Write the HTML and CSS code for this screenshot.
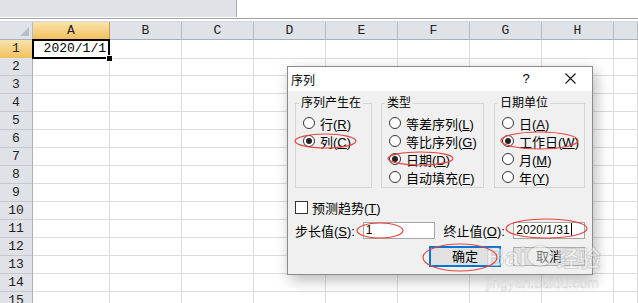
FILE: index.html
```html
<!DOCTYPE html>
<html>
<head>
    <title>序列</title>
    <link rel="stylesheet" href="styles.css">
</head>
<body>

    <div class="topbar"><div class="namebox"></div></div>
    <div class="rule"></div>

    <div id="sheet">
        <div class="row head">
            <div class="corner"></div>
            <div class="active">A</div>
            <div>B</div>
            <div>C</div>
            <div>D</div>
            <div>E</div>
            <div>F</div>
            <div>G</div>
            <div>H</div>
            <div></div>
        </div>
        <div class="row">
            <div class="rowhead active">1</div>
            <div class="cell sel">2020/1/1<span class="handle"></span></div>
            <div></div><div></div><div></div><div></div><div></div><div></div><div></div><div></div>
        </div>
    </div>

    <div class="dialog">
        <div class="titlebar">
            <span class="title">序列</span>
            <span class="tbtn">?</span>
            <span class="tbtn">
                <svg width="11" height="11" viewBox="0 0 11 11"><path d="M0.5 0.5 L10.5 10.5 M10.5 0.5 L0.5 10.5" stroke="#111" stroke-width="1.1" fill="none"/></svg>
            </span>
        </div>
        <div class="body">
            <div class="groups">
                <fieldset class="grp grp-1">
                    <legend>序列产生在</legend>
                    <div class="opt"><span class="radio"></span><span>行(<u>R</u>)</span></div>
                    <div class="opt"><span class="radio on"></span><span>列(<u>C</u>)</span></div>
                </fieldset>
                <fieldset class="grp grp-2">
                    <legend>类型</legend>
                    <div class="opt"><span class="radio"></span><span>等差序列(<u>L</u>)</span></div>
                    <div class="opt"><span class="radio"></span><span>等比序列(<u>G</u>)</span></div>
                    <div class="opt"><span class="radio on"></span><span>日期(<u>D</u>)</span></div>
                    <div class="opt"><span class="radio"></span><span>自动填充(<u>F</u>)</span></div>
                </fieldset>
                <fieldset class="grp grp-3">
                    <legend>日期单位</legend>
                    <div class="opt"><span class="radio"></span><span>日(<u>A</u>)</span></div>
                    <div class="opt"><span class="radio on"></span><span>工作日(<u>W</u>)</span></div>
                    <div class="opt"><span class="radio"></span><span>月(<u>M</u>)</span></div>
                    <div class="opt"><span class="radio"></span><span>年(<u>Y</u>)</span></div>
                </fieldset>
            </div>

            <div class="check-row"><span class="check"></span><span>预测趋势(<u>T</u>)</span></div>

            <div class="input-row">
                <span class="lbl">步长值(<u>S</u>):</span>
                <span class="field">1</span>
                <span class="lbl lbl-2">终止值(<u>O</u>):</span>
                <span class="field">2020/1/31<span class="caret"></span></span>
            </div>

            <div class="btn-row">
                <span class="btn btn-ok">确定</span>
                <span class="btn">取消</span>
            </div>
        </div>
    </div>

    <div class="watermark">
        <div class="wm-logo">Bai<span class="paw"></span><span class="wm-cn">经验</span></div>
        <div class="wm-url">jingyan.baidu.com</div>
    </div>

    <svg class="marks" width="638" height="303" viewBox="0 0 638 303">
        <g fill="none" stroke="#e8453c" stroke-width="1.2">
            <ellipse cx="325.5" cy="141" rx="30.5" ry="7"/>
            <ellipse cx="420.5" cy="158.5" rx="32.5" ry="6.5"/>
            <ellipse cx="539.5" cy="140.5" rx="38.5" ry="8.5"/>
            <ellipse cx="380" cy="230.5" rx="23" ry="7.5"/>
            <ellipse cx="546.5" cy="228.5" rx="40.5" ry="9.5"/>
            <ellipse cx="460" cy="257.5" rx="37" ry="13.5"/>
        </g>
    </svg>

    <script>
        var sheet = document.getElementById("sheet");

        for (var r = 2; r <= 15; r++) {
            var row = document.createElement("div");
            row.className = "row";

            var head = document.createElement("div");
            head.className = "rowhead";
            head.textContent = r;
            row.appendChild(head);

            for (var c = 0; c < 9; c++) {
                row.appendChild(document.createElement("div"));
            }
            sheet.appendChild(row);
        }
    </script>

</body>
</html>
```

FILE: styles.css
```css
body {
    margin: 0;
    width: 638px;
    height: 303px;
    overflow: hidden;
    position: relative;
    background-color: #fff;
    font-family: "Liberation Mono", monospace;
}

.topbar {
    height: 18px;
}

.namebox {
    width: 236px;
    height: 17px;
    background-color: #dfe2e7;
    border-right: 1px solid #a9adb3;
}

.rule {
    height: 2px;
    border-top: 1px solid #a3a3a3;
    border-bottom: 1px solid #d6d6d6;
}

#sheet {
    height: 281px;
    overflow: hidden;
}

.row {
    display: grid;
    grid-template-columns: 33px 77px repeat(7, 72px) 1fr;
    height: 18px;
}

.row > div {
    box-sizing: border-box;
    border-right: 1px solid #dadcdd;
    border-bottom: 1px solid #dadcdd;
}

.head > div {
    background-color: #dfe3e8;
    border-right-color: #b4bac2;
    border-bottom-color: #a8b0b9;
    text-align: center;
    font-size: 13px;
    line-height: 17px;
    color: #222;
}

.corner {
    position: relative;
}

.corner::after {
    content: "";
    position: absolute;
    right: 3px;
    bottom: 3px;
    border-left: 9px solid transparent;
    border-bottom: 9px solid #b9bec5;
}

.row > .rowhead {
    background-color: #dfe3e8;
    border-right-color: #a8b0b9;
    border-bottom-color: #c4c9cf;
    text-align: center;
    font-size: 13px;
    line-height: 17px;
    color: #222;
}

.row > .active {
    background: linear-gradient(#fae3ad, #f1c15f);
    border-right-color: #c29b4a;
    border-bottom-color: #c29b4a;
}

.cell {
    text-align: right;
    padding-right: 3px;
    font-size: 13px;
    line-height: 18px;
}

.sel {
    position: relative;
}

.sel::after {
    content: "";
    position: absolute;
    left: -1px;
    top: -1px;
    right: -1px;
    bottom: -1px;
    border: 2px solid #000;
}

.handle {
    position: absolute;
    right: -4px;
    bottom: -4px;
    width: 5px;
    height: 5px;
    background-color: #000;
    border: 1px solid #fff;
    z-index: 1;
}

/* dialog */

.dialog {
    position: absolute;
    left: 287px;
    top: 66px;
    width: 306px;
    height: 209px;
    box-sizing: border-box;
    border: 1px solid #8a8a8a;
    background-color: #f0f0f0;
    box-shadow: 3px 5px 14px rgba(0, 0, 0, 0.28);
    font-family: "Liberation Sans", "Noto Sans CJK SC", sans-serif;
    color: #000;
}

.titlebar {
    display: flex;
    align-items: center;
    height: 24px;
    padding-left: 3px;
    background-color: #fff;
    font-size: 12px;
}

.title {
    flex: 1;
}

.tbtn {
    width: 44px;
    text-align: center;
    font-size: 13px;
    line-height: 24px;
}

.tbtn svg {
    vertical-align: -1px;
}

.body {
    padding: 4px 7px 0 7px;
}

.groups {
    display: flex;
}

.grp {
    margin: 0;
    padding: 0;
    height: 93px;
    box-sizing: border-box;
    border: 1px solid #d5d5d5;
}

.grp legend {
    margin-left: 3px;
    padding: 0 2px;
    font-size: 12px;
    line-height: 16px;
    white-space: nowrap;
}

.grp-1 {
    width: 77px;
    margin-right: 9px;
}

.grp-2 {
    width: 103px;
    margin-right: 10px;
}

.grp-3 {
    width: 91px;
}

.opt {
    display: flex;
    align-items: center;
    gap: 5px;
    height: 18px;
    padding-left: 7px;
    font-size: 13px;
    white-space: nowrap;
}

.opt:first-of-type {
    margin-top: 3px;
}

.radio {
    position: relative;
    width: 12px;
    height: 12px;
    box-sizing: border-box;
    border: 1px solid #333;
    border-radius: 50%;
    background-color: #fff;
    flex-shrink: 0;
}

.radio.on::after {
    content: "";
    position: absolute;
    left: 2px;
    top: 2px;
    width: 6px;
    height: 6px;
    border-radius: 50%;
    background-color: #222;
}

.check-row {
    display: flex;
    align-items: center;
    gap: 4px;
    height: 16px;
    margin-top: 11px;
    font-size: 13px;
}

.check {
    width: 13px;
    height: 13px;
    box-sizing: border-box;
    border: 1px solid #333;
    background-color: #fff;
}

.input-row {
    display: flex;
    align-items: center;
    height: 17px;
    margin-top: 7px;
    font-size: 13px;
}

.lbl {
    width: 68px;
    white-space: nowrap;
}

.lbl-2 {
    width: 70px;
    margin-left: 9px;
}

.field {
    width: 72px;
    height: 17px;
    box-sizing: border-box;
    border: 1px solid #a5a5a5;
    background-color: #fff;
    padding-left: 2px;
    font-size: 12px;
    line-height: 15px;
}

.caret {
    display: inline-block;
    width: 1px;
    height: 13px;
    margin-left: 1px;
    background-color: #000;
    vertical-align: -2px;
}

.btn-row {
    display: flex;
    justify-content: flex-end;
    align-items: center;
    gap: 12px;
    height: 21px;
    margin-top: 7px;
}

.btn {
    width: 72px;
    height: 19px;
    box-sizing: border-box;
    border: 1px solid #adadad;
    background-color: #e1e1e1;
    text-align: center;
    font-size: 13px;
    line-height: 17px;
}

.btn-ok {
    height: 21px;
    border: 2px solid #0078d7;
}

/* overlays */

.watermark {
    position: absolute;
    left: 486px;
    top: 240px;
    pointer-events: none;
}

.wm-logo {
    font-family: "Liberation Sans", sans-serif;
    font-weight: bold;
    font-size: 26px;
    line-height: 32px;
    color: rgba(255, 255, 255, 0.55);
    -webkit-text-stroke: 1px rgba(150, 150, 150, 0.35);
}

.paw {
    display: inline-block;
    width: 24px;
    height: 20px;
    margin: 0 4px 0 2px;
    border-radius: 50%;
    background-color: rgba(255, 255, 255, 0.45);
    box-shadow: 0 0 0 1px rgba(150, 150, 150, 0.3);
}

.wm-cn {
    font-family: "Noto Sans CJK SC", sans-serif;
    font-size: 22px;
}

.wm-url {
    margin-top: 2px;
    font-family: "Liberation Sans", sans-serif;
    font-size: 14px;
    color: rgba(255, 255, 255, 0.6);
    -webkit-text-stroke: 0.6px rgba(150, 150, 150, 0.35);
}

.marks {
    position: absolute;
    left: 0;
    top: 0;
    pointer-events: none;
}
```
